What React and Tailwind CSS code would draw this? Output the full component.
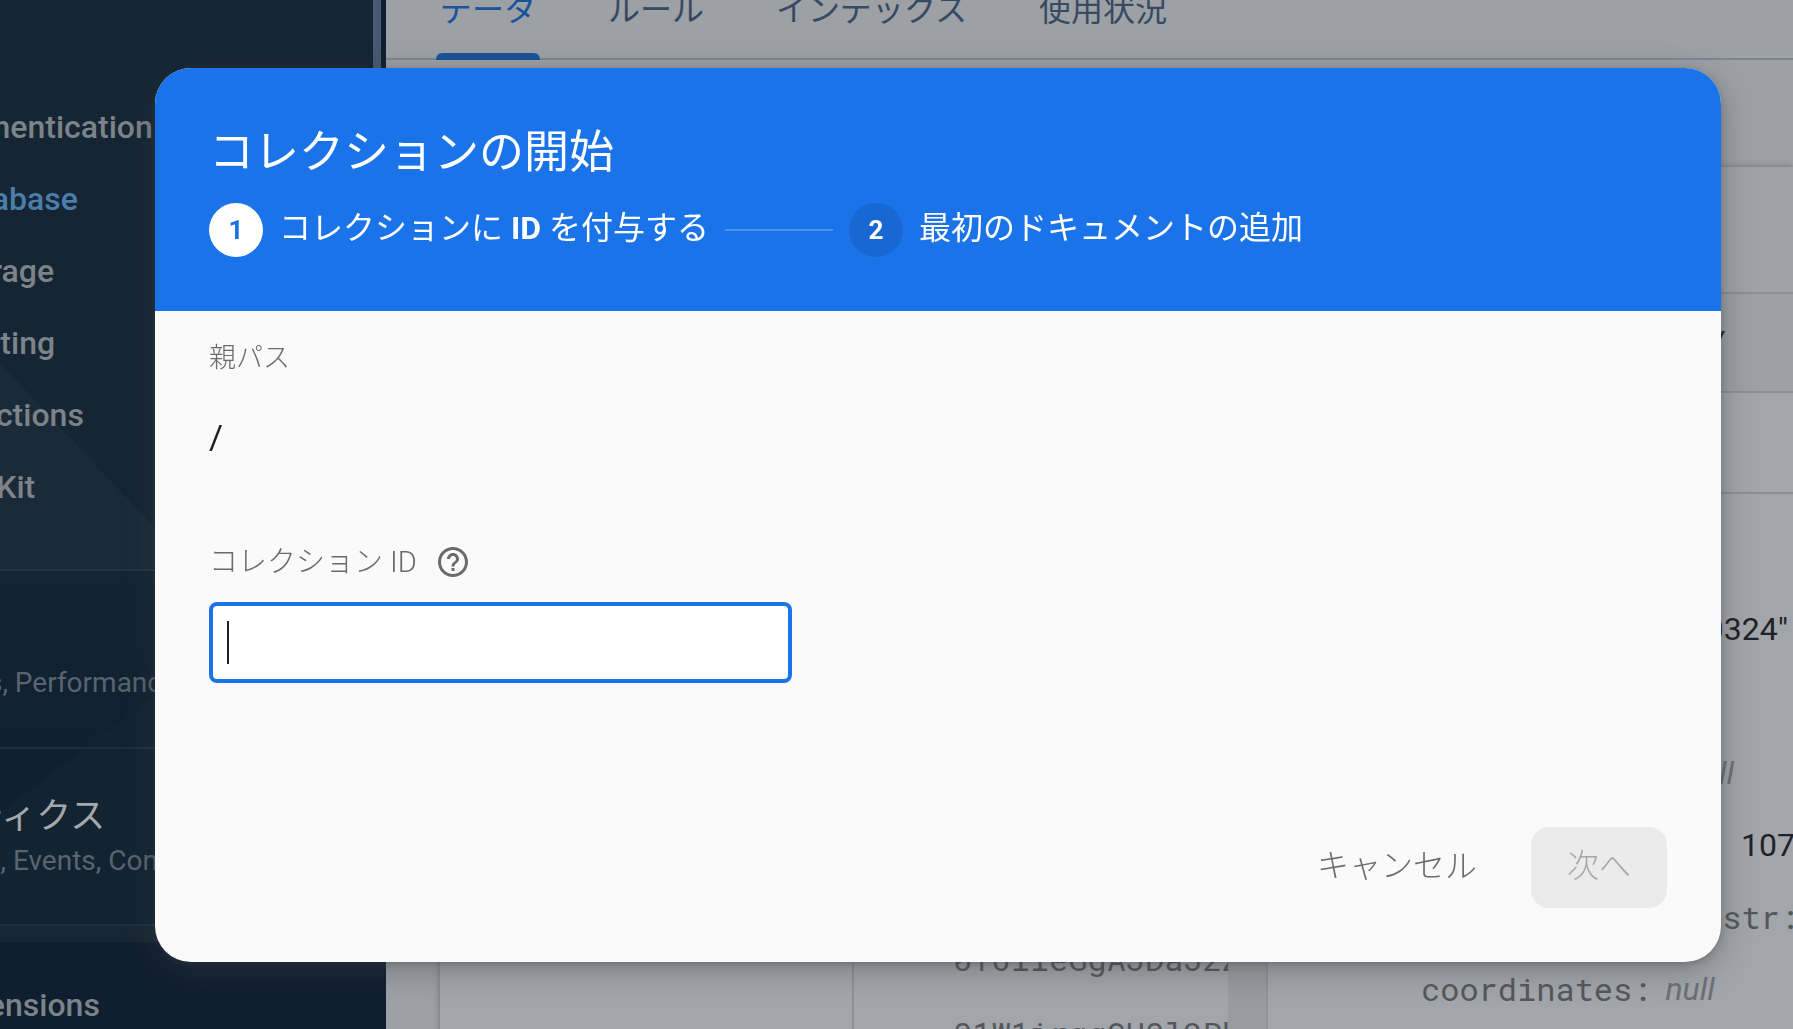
import React, { useState } from "react";

const navItems = ["Authentication", "Database", "Storage", "Hosting", "Functions", "ML Kit"];
const tabs = ["データ", "ルール", "インデックス", "使用状況"];
const documentIds = ["0Y6lieGgAJDaJ2ZL", "01W1irggQU0l2Pk"];

const HelpIcon = () => (
  <svg viewBox="0 0 24 24" className="w-9 h-9" fill="currentColor" aria-hidden="true">
    <path d="M11 18h2v-2h-2v2zm1-16C6.48 2 2 6.48 2 12s4.48 10 10 10 10-4.48 10-10S17.52 2 12 2zm0 18c-4.41 0-8-3.59-8-8s3.59-8 8-8 8 3.59 8 8-3.59 8-8 8zm0-14c-2.21 0-4 1.79-4 4h2c0-1.1.9-2 2-2s2 .9 2 2c0 2-3 1.75-3 5h2c0-2.25 3-2.5 3-5 0-2.21-1.79-4-4-4z" />
  </svg>
);

const Sidebar = () => (
  <aside className="w-[386px] shrink-0 flex flex-col bg-[#0f1e30] overflow-hidden">
    <div className="flex">
      <div className="relative flex-1 min-w-0 bg-[#152534] overflow-hidden">
        <svg viewBox="0 0 373 942" className="absolute top-0 left-0 w-[373px] h-[942px]" aria-hidden="true">
          <defs>
            <linearGradient id="fade" x1="0" y1="0" x2="0" y2="1">
              <stop offset="0" stopColor="#132435" />
              <stop offset="0.5" stopColor="#0f2031" />
              <stop offset="1" stopColor="#0f2031" />
            </linearGradient>
          </defs>
          <path d="M0 363L155 528L195 570H0z" fill="#1a2a38" />
          <path d="M0 571H373V942H0z" fill="url(#fade)" />
          <path d="M155 695L0 812V924H155z" fill="#152534" opacity="0.5" />
        </svg>
        <nav className="relative pt-[91px] h-[571px] border-b-2 border-[#20354c]">
          <ul className="-ml-[57px] text-[32px] leading-[72px] font-medium text-[#7c8389]">
            {navItems.map((item) => (
              <li key={item}>
                <a href="#" className={item === "Database" ? "text-[#4a7eab]" : ""}>{item}</a>
              </li>
            ))}
          </ul>
        </nav>
        <section className="relative h-[178px] pt-[92px] border-b-2 border-[#1b3047]">
          <p className="-ml-[135px] text-[28px] leading-10 text-[#59646f] whitespace-nowrap">Crashlytics, Performance, Test Lab</p>
        </section>
        <section className="relative h-[177px] pt-[44px] border-b-2 border-[#1b3047]">
          <h2 className="-ml-[136px] text-[35px] leading-[48px] text-[#a5a8ab] whitespace-nowrap">アナリティクス</h2>
          <p className="-ml-[135px] text-[28px] leading-10 text-[#59646f] whitespace-nowrap">Dashboard, Events, Conversions</p>
        </section>
        <div className="relative h-4 bg-[#182734]" />
      </div>
      <div className="w-2 mr-[5px] bg-[#475a71]" />
    </div>
    <a href="#" className="-ml-[57px] pt-[42px] text-[32px] leading-[42px] font-medium text-[#7c8389]">
      Extensions
    </a>
  </aside>
);

const DataView = () => (
  <main className="flex-1 min-w-0 flex flex-col bg-[#9da0a5] text-[#1f2226]">
    <div className="h-15 shrink-0 flex gap-16 pl-[50px] border-b-2 border-[#7c8691] text-[32px] leading-10 text-[#374a63]">
      {tabs.map((tab, i) => (
        <button
          key={tab}
          className={i === 0 ? "relative h-15 px-1 pb-[30px] -mb-0.5 flex flex-col justify-end text-[#1b529c]" : "h-15 px-1 pb-[30px] flex flex-col justify-end"}
        >
          {tab}
          {i === 0 && <span className="absolute inset-x-0 bottom-0 h-[7px] rounded-t-md bg-[#1b529c]" />}
        </button>
      ))}
    </div>
    <div className="flex-1 flex flex-col mt-[107px] ml-[54px] bg-[#a2a5a9] shadow-[0_0_6px_rgba(60,64,67,0.5)]">
      <div className="h-[127px] bg-[#9fa2a6] border-b-2 border-[#8b8e93]" />
      <div className="h-[99px] bg-[#9da0a4] border-b-2 border-[#8b8e93] flex">
        <div className="w-[1284px] pt-5 text-right text-[30px] italic">category</div>
      </div>
      <div className="flex-1 flex">
        <div className="w-[414px] border-r-2 border-[#8e9196]" />
        <div className="w-[414px] flex border-r-2 border-[#8e9196] overflow-hidden">
          <ul className="w-[374px] pt-[529px] pl-[99px] overflow-hidden font-['Roboto_Mono','DejaVu_Sans_Mono','Liberation_Mono',monospace] text-[32px] leading-[74px] text-[#54575c]">
            {documentIds.map((id) => <li key={id}>{id}</li>)}
          </ul>
          <div className="flex-1 bg-[#989b9f]" />
        </div>
        <div className="flex-1 min-w-0 overflow-hidden text-[32px] leading-[72px] whitespace-nowrap">
          <div className="h-[101px] border-b-2 border-[#8b8e93]" />
          <div className="pt-[99px]">
            <p className="w-[520px] text-right">"20190324"</p>
            <p className="w-[466px] pt-[72px] text-right italic text-[#6c6f74]">null</p>
            <p className="pl-[473px]">1078900</p>
            <p className="w-[531px] text-right font-['Roboto_Mono','DejaVu_Sans_Mono','Liberation_Mono',monospace] text-[#54575c]">id_str:</p>
            <p className="pl-[153px] flex gap-[14px] text-[#54575c]">
              <span className="font-['Roboto_Mono','DejaVu_Sans_Mono','Liberation_Mono',monospace]">coordinates:</span>
              <i className="text-[#6c6f74]">null</i>
            </p>
          </div>
        </div>
      </div>
    </div>
  </main>
);

const Step = ({ number, active, children }) => (
  <li className="flex items-center gap-4">
    <span className={active
      ? "size-[54px] rounded-full flex items-center justify-center text-[26px] font-bold bg-white text-[#1a73e8]"
      : "size-[54px] rounded-full flex items-center justify-center text-[26px] font-bold bg-[#1967d2] text-white"}
    >
      {number}
    </span>
    <span className="text-[32px] leading-10 pb-1">{children}</span>
  </li>
);

const CollectionDialog = () => {
  const [collectionId, setCollectionId] = useState("");

  return (
    <div className="fixed inset-0 pl-[155px] pr-[72px] pt-[68px]">
      <form
        role="dialog"
        aria-labelledby="dialog-title"
        className="rounded-[36px] overflow-hidden bg-[#fafafa] shadow-[0_2px_6px_rgba(60,64,67,0.3),0_8px_32px_rgba(60,64,67,0.4)]"
      >
        <header className="h-[243px] px-[54px] pt-[55px] bg-[#1a73e8] text-white">
          <h1 id="dialog-title" className="text-[45px] leading-[60px]">コレクションの開始</h1>
          <ol className="flex items-center mt-5">
            <Step number={1} active>コレクションに <b>ID</b> を付与する</Step>
            <li className="w-[108px] h-0.5 mx-4 bg-[#4a90ee]" aria-hidden="true" />
            <Step number={2}>最初のドキュメントの追加</Step>
          </ol>
        </header>
        <div className="px-[54px] pt-[27px] pb-[54px]">
          <p className="text-[27px] leading-10 font-light text-[#6b6b6b]">親パス</p>
          <p className="pt-8 text-[34px] leading-[54px] text-[#212121]">/</p>
          <div className="flex items-center gap-[18px] mt-[78px] text-[#6b6b6b]">
            <label htmlFor="collection-id" className="text-[29px] leading-10 font-light">コレクション ID</label>
            <button type="button" aria-label="ヘルプ"><HelpIcon /></button>
          </div>
          <div className="relative w-[583px] mt-5">
            <input
              id="collection-id"
              value={collectionId}
              onChange={(e) => setCollectionId(e.target.value)}
              className="block w-full h-[81px] px-[14px] rounded-lg border-4 border-[#1a73e8] bg-white text-[36px] outline-none caret-transparent"
            />
            {collectionId === "" && (
              <span className="absolute left-[18px] top-[19px] w-0.5 h-[43px] bg-[#212121] pointer-events-none" />
            )}
          </div>
          <div className="flex justify-end gap-[18px] mt-36 text-[32px] font-light">
            <button type="button" className="h-[81px] px-9 pb-1 text-[#6b6b6b]">キャンセル</button>
            <button type="submit" disabled className="h-[81px] px-9 pb-1 rounded-[18px] bg-[#ebebeb] text-[#a8a8a8]">次へ</button>
          </div>
        </div>
      </form>
    </div>
  );
};

const App = () => (
  <div className="h-screen flex overflow-hidden font-['Roboto','Noto_Sans_CJK_JP',sans-serif]">
    <Sidebar />
    <DataView />
    <CollectionDialog />
  </div>
);

export default App;
